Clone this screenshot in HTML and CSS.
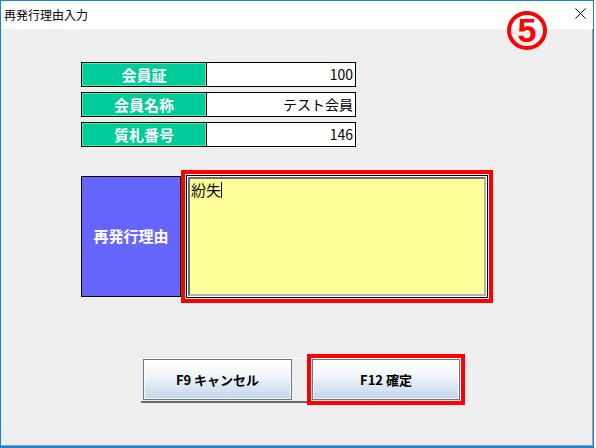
FILE: index.html
```html
<!DOCTYPE html>
<html lang="ja">
<head>
<meta charset="utf-8">
<title>再発行理由入力</title>
<link rel="stylesheet" href="styles.css">
</head>
<body>
<div class="window">
  <div class="titlebar">
    <span class="title">再発行理由入力</span>
    <svg class="close" width="11" height="11" viewBox="0 0 11 11"><path d="M0.5 0.5 L10.5 10.5 M10.5 0.5 L0.5 10.5" stroke="#000" stroke-width="1" fill="none"/></svg>
  </div>
  <div class="client">
    <div class="fields">
      <div class="field"><div class="field-label">会員証</div><div class="field-value">100</div></div>
      <div class="field"><div class="field-label">会員名称</div><div class="field-value">テスト会員</div></div>
      <div class="field"><div class="field-label">質札番号</div><div class="field-value">146</div></div>
    </div>
    <div class="reason">
      <div class="reason-label">再発行理由</div>
      <div class="memo-frame">
        <div class="memo"><span class="memo-text">紛失</span><span class="caret"></span></div>
      </div>
    </div>
    <div class="buttons">
      <button class="btn">F9 キャンセル</button>
      <button class="btn btn-primary">F12 確定</button>
    </div>
  </div>
  <div class="marker">5</div>
</div>
</body>
</html>
```
FILE: styles.css
```css
html, body {
  margin: 0;
  padding: 0;
  background: #ffffff;
}
body {
  font-family: "Noto Sans CJK JP", "Noto Sans", sans-serif;
  width: 596px;
  height: 448px;
  overflow: hidden;
}
.window {
  position: relative;
  width: 594px;
  height: 448px;
  box-sizing: border-box;
  border: 1px solid #1883d7;
  border-bottom-width: 2px;
  display: flex;
  flex-direction: column;
  background: #ffffff;
}
.titlebar {
  height: 27px;
  flex: none;
  display: flex;
  align-items: center;
  justify-content: space-between;
  padding: 0 7px 1px 3px;
  background: #ffffff;
}
.title {
  font-size: 12px;
  line-height: 14px;
  color: #000;
}
.close {
  display: block;
  margin-bottom: 2px;
}
.client {
  flex: 1;
  background: #eeeeee;
  border-right: 1px solid #a0a0a0;
  border-bottom: 1px solid #a0a0a0;
  padding: 33px 0 0 80px;
  display: flex;
  flex-direction: column;
  align-items: flex-start;
}
.fields {
  display: flex;
  flex-direction: column;
  gap: 5px;
}
.field {
  display: flex;
  width: 275px;
  height: 25px;
  box-sizing: border-box;
  border: 1px solid #000;
}
.field-label {
  width: 124px;
  box-sizing: border-box;
  border: 1px solid #3ff0bd;
  background: #00cc99;
  color: #fff;
  font-weight: bold;
  font-size: 15px;
  line-height: 21px;
  text-align: center;
}
.field-value {
  flex: 1;
  border-left: 1px solid #000;
  background: #fff;
  color: #000;
  font-size: 14px;
  line-height: 23px;
  text-align: right;
  padding-right: 2px;
}
.reason {
  display: flex;
  align-items: center;
  margin-top: 28px;
}
.reason-label {
  width: 100px;
  height: 121px;
  box-sizing: border-box;
  border: 1px solid #000;
  background: #6666ff;
  color: #fff;
  font-weight: bold;
  font-size: 15px;
  display: flex;
  align-items: center;
  justify-content: center;
  padding-bottom: 3px;
}
.memo-frame {
  margin-left: 5px;
  width: 302px;
  height: 123px;
  box-sizing: border-box;
  border: 1px solid #000;
  padding: 1px;
  background: #fff;
  outline: 4px solid #ff0000;
  outline-offset: 1px;
}
.memo {
  height: 100%;
  box-sizing: border-box;
  border: 2px solid;
  border-color: #6e6e6e #a9b0b8 #a9b0b8 #6e6e6e;
  background: #ffff99;
  padding: 2px 0 0 1px;
  display: flex;
  align-items: flex-start;
}
.memo-text {
  font-size: 15px;
  line-height: 17px;
  color: #111;
}
.caret {
  display: block;
  width: 1px;
  height: 16px;
  margin-top: 1px;
  background: #000;
}
.buttons {
  display: flex;
  gap: 20px;
  margin: 60px 0 0 60px;
  padding: 0 2px 1px 2px;
  border-top: 1px solid #ffffff;
  border-bottom: 2px solid #6b6b6b;
}
.btn {
  width: 149px;
  height: 41px;
  margin: 0;
  padding: 0;
  box-sizing: border-box;
  border: 1px solid #66788a;
  background: linear-gradient(#ffffff 0%, #f4f8fc 35%, #c3d5ea 100%);
  box-shadow: inset 0 0 0 1px rgba(255, 255, 255, 0.75);
  font-family: "Noto Sans CJK JP", "Noto Sans", sans-serif;
  font-weight: bold;
  font-size: 13px;
  color: #000;
}
.btn-primary {
  width: 148px;
  outline: 4px solid #ff0000;
  outline-offset: 1px;
}
.marker {
  position: absolute;
  left: 506px;
  top: 10px;
  width: 40px;
  height: 39px;
  box-sizing: border-box;
  border: 4px solid #ff0000;
  border-radius: 50%;
  color: #ff0000;
  font-family: "Liberation Sans", Arial, sans-serif;
  font-weight: bold;
  font-size: 34px;
  line-height: 31px;
  text-align: center;
}
```
